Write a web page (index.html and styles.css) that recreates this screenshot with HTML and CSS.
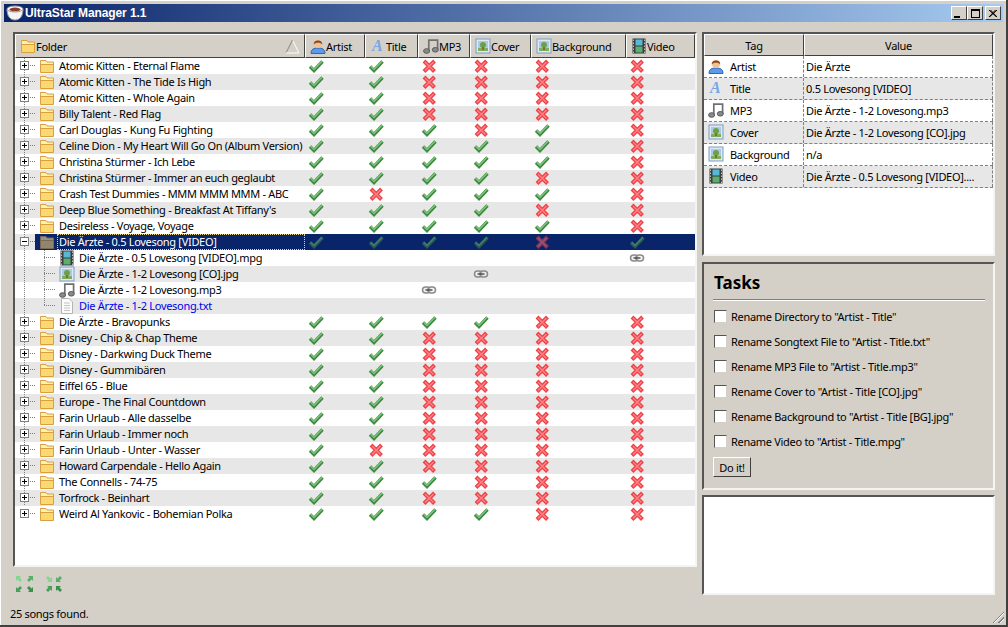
FILE: index.html
```html
<!DOCTYPE html>
<html>
<head>
    <meta charset="utf-8">
    <title>UltraStar Manager 1.1</title>
    <link rel="stylesheet" href="styles.css">
</head>
<body>

<svg class="defs" width="0" height="0">
    <symbol id="y" viewBox="0 0 16 16">
        <polyline points="2,8.5 6,12.5 14.5,3.5" fill="none" stroke="#3f8a42" stroke-width="3.4"/>
        <polyline points="2.6,8.2 6,11.5 14,3.2" fill="none" stroke="#7cc47a" stroke-width="1.5"/>
    </symbol>
    <symbol id="n" viewBox="0 0 16 16">
        <path d="M3 3 L13.5 13.5 M13.5 3 L3 13.5" fill="none" stroke="#ee4449" stroke-width="4"/>
        <path d="M4 4 L12.5 12.5 M12.5 4 L4 12.5" fill="none" stroke="#ff8488" stroke-width="1.4"/>
    </symbol>
    <symbol id="folder" viewBox="0 0 16 16">
        <path d="M1.5 4.5 V2.5 H7 L8 4 H14.5 V14.5 H1.5 Z" fill="#fff0b0" stroke="#d8a040"/>
        <path d="M2 7 H14 V14 H2 Z" fill="#fbd970"/>
        <path d="M2 6.5 H14" stroke="#d8a040"/>
    </symbol>
    <symbol id="artist" viewBox="0 0 16 16">
        <path d="M1 15.5 C1 11 4 10 8 10 C12 10 15 11 15 15.5 Z" fill="#5a9ae8" stroke="#2f66b8"/>
        <circle cx="8" cy="6" r="4" fill="#f2c096"/>
        <path d="M3.8 6.5 C3 1 13 1 12.2 6.5 C11 4 5 4 3.8 6.5 Z" fill="#8a4a20"/>
    </symbol>
    <symbol id="mp3" viewBox="0 0 16 16">
        <path d="M5.8 13 V2.2 H14.6 V11.5" fill="none" stroke="#707070" stroke-width="1.7"/>
        <ellipse cx="3.6" cy="13" rx="3" ry="2.3" fill="#8a8a8a" stroke="#5a5a5a"/>
        <ellipse cx="12.3" cy="11.8" rx="3" ry="2.3" fill="#8a8a8a" stroke="#5a5a5a"/>
    </symbol>
    <symbol id="pic" viewBox="0 0 16 16">
        <rect x="1" y="1" width="14" height="14" fill="#dfe8f4" stroke="#7f9cc4"/>
        <rect x="3" y="3" width="10" height="10" fill="#a8cce8"/>
        <rect x="3" y="10" width="10" height="3" fill="#7fae58"/>
        <circle cx="8" cy="7" r="3" fill="#6fa048"/>
        <rect x="7" y="9" width="2" height="3" fill="#8a6a3a"/>
    </symbol>
    <symbol id="film" viewBox="0 0 16 16">
        <rect x="1.5" y="0.5" width="13" height="15" fill="#3c3c3c"/>
        <rect x="4.5" y="1.5" width="7" height="6" fill="#58b8d8"/>
        <rect x="4.5" y="8.5" width="7" height="6" fill="#58b070"/>
        <path d="M2.5 1.5 V15 M13.5 1.5 V15" stroke="#bbb" stroke-dasharray="1.5 1.5"/>
    </symbol>
    <symbol id="doc" viewBox="0 0 16 16">
        <path d="M2.5 0.5 H10 L13.5 4 V15.5 H2.5 Z" fill="#fbfbfb" stroke="#b4b4b4"/>
        <path d="M5 5 H11 M5 7.5 H11 M5 10 H11 M5 12.5 H11" stroke="#c4c4c4"/>
    </symbol>
    <symbol id="link" viewBox="0 0 16 16">
        <rect x="1.5" y="5" width="7.5" height="6" rx="3" fill="#eee" stroke="#8a8a8a" stroke-width="1.5"/>
        <rect x="7" y="5" width="7.5" height="6" rx="3" fill="#eee" fill-opacity=".6" stroke="#8a8a8a" stroke-width="1.5"/>
        <path d="M4.5 8 H11.5" stroke="#333" stroke-width="1.2"/>
    </symbol>
    <symbol id="arrow" viewBox="0 0 6 6">
        <path d="M0 0 H5 L3.5 1.5 L6 4 L4 6 L1.5 3.5 L0 5 Z"/>
    </symbol>
    <symbol id="grow" viewBox="0 0 18 17">
        <use href="#arrow" x="0" y="0" width="6" height="6" fill="#86d492"/>
        <use href="#arrow" x="-17" y="0" width="6" height="6" transform="scale(-1 1)" fill="#58b068"/>
        <use href="#arrow" x="0" y="-16" width="6" height="6" transform="scale(1 -1)" fill="#48a058"/>
        <use href="#arrow" x="-17" y="-16" width="6" height="6" transform="scale(-1 -1)" fill="#38904c"/>
    </symbol>
    <symbol id="shrink" viewBox="0 0 18 17">
        <use href="#arrow" x="-7" y="-6" width="6" height="6" transform="scale(-1 -1)" fill="#86d492"/>
        <use href="#arrow" x="11" y="-6" width="6" height="6" transform="scale(1 -1)" fill="#58b068"/>
        <use href="#arrow" x="-7" y="10" width="6" height="6" transform="scale(-1 1)" fill="#48a058"/>
        <use href="#arrow" x="11" y="10" width="6" height="6" fill="#38904c"/>
    </symbol>
</svg>

<div class="window">

    <div class="titlebar">
        <svg class="app-icon" viewBox="0 0 18 16">
            <path d="M1 4 C1 11 4 15 9 15 C14 15 17 11 17 4 Z" fill="#f4f4f4" stroke="#999"/>
            <ellipse cx="9" cy="4" rx="8" ry="3" fill="#fff" stroke="#999"/>
            <ellipse cx="9" cy="4.4" rx="5.6" ry="1.8" fill="#8a3c2c"/>
        </svg>
        <span class="app-name">UltraStar Manager 1.1</span>
        <div class="win-buttons">
            <span class="win-btn"><i class="g-min"></i></span>
            <span class="win-btn"><i class="g-max"></i></span>
            <span class="win-btn win-close"><svg width="8" height="7" viewBox="0 0 8 7"><path d="M0 0 L7.5 7 M1.5 0 L8 7 M8 0 L.5 7 M6.5 0 L0 7" stroke="#000"/></svg></span>
        </div>
    </div>

    <div class="main">

        <div class="left">
            <div class="tree sunken">
                <div class="row head">
                    <div class="hd hd-folder"><svg class="ic"><use href="#folder"/></svg><span class="hd-text">Folder</span>
                        <svg class="sort" width="15" height="15" viewBox="0 0 15 15"><path d="M7.5 1 L14 14" fill="none" stroke="#fff"/><path d="M7.5 1 L1 14" fill="none" stroke="#8a867e"/><path d="M14 14 H1" stroke="#fff"/></svg>
                    </div>
                    <div class="hd"><svg class="ic"><use href="#artist"/></svg><span class="hd-text">Artist</span></div>
                    <div class="hd"><svg class="ic" viewBox="0 0 16 16"><text x="2" y="13" class="icon-a">A</text></svg><span class="hd-text">Title</span></div>
                    <div class="hd"><svg class="ic"><use href="#mp3"/></svg><span class="hd-text">MP3</span></div>
                    <div class="hd"><svg class="ic"><use href="#pic"/></svg><span class="hd-text">Cover</span></div>
                    <div class="hd"><svg class="ic"><use href="#pic"/></svg><span class="hd-text">Background</span></div>
                    <div class="hd"><svg class="ic"><use href="#film"/></svg><span class="hd-text">Video</span></div>
                </div>

                <div class="row"><div class="name"><span class="branch"><i class="exp"></i></span><svg class="ic"><use href="#folder"/></svg><span class="label">Atomic Kitten - Eternal Flame</span></div><div class="c"><svg class="ic"><use href="#y"/></svg></div><div class="c"><svg class="ic"><use href="#y"/></svg></div><div class="c"><svg class="ic"><use href="#n"/></svg></div><div class="c"><svg class="ic"><use href="#n"/></svg></div><div class="c"><svg class="ic"><use href="#n"/></svg></div><div class="c"><svg class="ic"><use href="#n"/></svg></div></div>
                <div class="row alt"><div class="name"><span class="branch"><i class="exp"></i></span><svg class="ic"><use href="#folder"/></svg><span class="label">Atomic Kitten - The Tide Is High</span></div><div class="c"><svg class="ic"><use href="#y"/></svg></div><div class="c"><svg class="ic"><use href="#y"/></svg></div><div class="c"><svg class="ic"><use href="#n"/></svg></div><div class="c"><svg class="ic"><use href="#n"/></svg></div><div class="c"><svg class="ic"><use href="#n"/></svg></div><div class="c"><svg class="ic"><use href="#n"/></svg></div></div>
                <div class="row"><div class="name"><span class="branch"><i class="exp"></i></span><svg class="ic"><use href="#folder"/></svg><span class="label">Atomic Kitten - Whole Again</span></div><div class="c"><svg class="ic"><use href="#y"/></svg></div><div class="c"><svg class="ic"><use href="#y"/></svg></div><div class="c"><svg class="ic"><use href="#n"/></svg></div><div class="c"><svg class="ic"><use href="#n"/></svg></div><div class="c"><svg class="ic"><use href="#n"/></svg></div><div class="c"><svg class="ic"><use href="#n"/></svg></div></div>
                <div class="row alt"><div class="name"><span class="branch"><i class="exp"></i></span><svg class="ic"><use href="#folder"/></svg><span class="label">Billy Talent - Red Flag</span></div><div class="c"><svg class="ic"><use href="#y"/></svg></div><div class="c"><svg class="ic"><use href="#y"/></svg></div><div class="c"><svg class="ic"><use href="#n"/></svg></div><div class="c"><svg class="ic"><use href="#n"/></svg></div><div class="c"><svg class="ic"><use href="#n"/></svg></div><div class="c"><svg class="ic"><use href="#n"/></svg></div></div>
                <div class="row"><div class="name"><span class="branch"><i class="exp"></i></span><svg class="ic"><use href="#folder"/></svg><span class="label">Carl Douglas - Kung Fu Fighting</span></div><div class="c"><svg class="ic"><use href="#y"/></svg></div><div class="c"><svg class="ic"><use href="#y"/></svg></div><div class="c"><svg class="ic"><use href="#y"/></svg></div><div class="c"><svg class="ic"><use href="#n"/></svg></div><div class="c"><svg class="ic"><use href="#y"/></svg></div><div class="c"><svg class="ic"><use href="#n"/></svg></div></div>
                <div class="row alt"><div class="name"><span class="branch"><i class="exp"></i></span><svg class="ic"><use href="#folder"/></svg><span class="label">Celine Dion - My Heart Will Go On (Album Version)</span></div><div class="c"><svg class="ic"><use href="#y"/></svg></div><div class="c"><svg class="ic"><use href="#y"/></svg></div><div class="c"><svg class="ic"><use href="#y"/></svg></div><div class="c"><svg class="ic"><use href="#y"/></svg></div><div class="c"><svg class="ic"><use href="#y"/></svg></div><div class="c"><svg class="ic"><use href="#n"/></svg></div></div>
                <div class="row"><div class="name"><span class="branch"><i class="exp"></i></span><svg class="ic"><use href="#folder"/></svg><span class="label">Christina Stürmer - Ich Lebe</span></div><div class="c"><svg class="ic"><use href="#y"/></svg></div><div class="c"><svg class="ic"><use href="#y"/></svg></div><div class="c"><svg class="ic"><use href="#y"/></svg></div><div class="c"><svg class="ic"><use href="#y"/></svg></div><div class="c"><svg class="ic"><use href="#y"/></svg></div><div class="c"><svg class="ic"><use href="#n"/></svg></div></div>
                <div class="row alt"><div class="name"><span class="branch"><i class="exp"></i></span><svg class="ic"><use href="#folder"/></svg><span class="label">Christina Stürmer - Immer an euch geglaubt</span></div><div class="c"><svg class="ic"><use href="#y"/></svg></div><div class="c"><svg class="ic"><use href="#y"/></svg></div><div class="c"><svg class="ic"><use href="#y"/></svg></div><div class="c"><svg class="ic"><use href="#y"/></svg></div><div class="c"><svg class="ic"><use href="#n"/></svg></div><div class="c"><svg class="ic"><use href="#n"/></svg></div></div>
                <div class="row"><div class="name"><span class="branch"><i class="exp"></i></span><svg class="ic"><use href="#folder"/></svg><span class="label">Crash Test Dummies - MMM MMM MMM - ABC</span></div><div class="c"><svg class="ic"><use href="#y"/></svg></div><div class="c"><svg class="ic"><use href="#n"/></svg></div><div class="c"><svg class="ic"><use href="#y"/></svg></div><div class="c"><svg class="ic"><use href="#y"/></svg></div><div class="c"><svg class="ic"><use href="#y"/></svg></div><div class="c"><svg class="ic"><use href="#n"/></svg></div></div>
                <div class="row alt"><div class="name"><span class="branch"><i class="exp"></i></span><svg class="ic"><use href="#folder"/></svg><span class="label">Deep Blue Something - Breakfast At Tiffany's</span></div><div class="c"><svg class="ic"><use href="#y"/></svg></div><div class="c"><svg class="ic"><use href="#y"/></svg></div><div class="c"><svg class="ic"><use href="#y"/></svg></div><div class="c"><svg class="ic"><use href="#y"/></svg></div><div class="c"><svg class="ic"><use href="#n"/></svg></div><div class="c"><svg class="ic"><use href="#n"/></svg></div></div>
                <div class="row"><div class="name"><span class="branch"><i class="exp"></i></span><svg class="ic"><use href="#folder"/></svg><span class="label">Desireless - Voyage, Voyage</span></div><div class="c"><svg class="ic"><use href="#y"/></svg></div><div class="c"><svg class="ic"><use href="#y"/></svg></div><div class="c"><svg class="ic"><use href="#y"/></svg></div><div class="c"><svg class="ic"><use href="#y"/></svg></div><div class="c"><svg class="ic"><use href="#y"/></svg></div><div class="c"><svg class="ic"><use href="#n"/></svg></div></div>

                <div class="row alt selected"><div class="name"><span class="branch"><i class="exp open"></i></span><div class="sel-part"><svg class="ic"><use href="#folder"/></svg><span class="label">Die Ärzte - 0.5 Lovesong [VIDEO]</span></div></div><div class="c"><svg class="ic"><use href="#y"/></svg></div><div class="c"><svg class="ic"><use href="#y"/></svg></div><div class="c"><svg class="ic"><use href="#y"/></svg></div><div class="c"><svg class="ic"><use href="#y"/></svg></div><div class="c"><svg class="ic"><use href="#n"/></svg></div><div class="c"><svg class="ic"><use href="#y"/></svg></div></div>
                <div class="row child"><div class="name"><span class="branch no-arm"></span><span class="branch2"></span><svg class="ic"><use href="#film"/></svg><span class="label">Die Ärzte - 0.5 Lovesong [VIDEO].mpg</span></div><div class="c"></div><div class="c"></div><div class="c"></div><div class="c"></div><div class="c"></div><div class="c"><svg class="ic"><use href="#link"/></svg></div></div>
                <div class="row alt child"><div class="name"><span class="branch no-arm"></span><span class="branch2"></span><svg class="ic"><use href="#pic"/></svg><span class="label">Die Ärzte - 1-2 Lovesong [CO].jpg</span></div><div class="c"></div><div class="c"></div><div class="c"></div><div class="c"><svg class="ic"><use href="#link"/></svg></div><div class="c"></div><div class="c"></div></div>
                <div class="row child"><div class="name"><span class="branch no-arm"></span><span class="branch2"></span><svg class="ic"><use href="#mp3"/></svg><span class="label">Die Ärzte - 1-2 Lovesong.mp3</span></div><div class="c"></div><div class="c"></div><div class="c"><svg class="ic"><use href="#link"/></svg></div><div class="c"></div><div class="c"></div><div class="c"></div></div>
                <div class="row alt child"><div class="name"><span class="branch no-arm"></span><span class="branch2 last"></span><svg class="ic"><use href="#doc"/></svg><span class="label songtext">Die Ärzte - 1-2 Lovesong.txt</span></div><div class="c"></div><div class="c"></div><div class="c"></div><div class="c"></div><div class="c"></div><div class="c"></div></div>

                <div class="row"><div class="name"><span class="branch"><i class="exp"></i></span><svg class="ic"><use href="#folder"/></svg><span class="label">Die Ärzte - Bravopunks</span></div><div class="c"><svg class="ic"><use href="#y"/></svg></div><div class="c"><svg class="ic"><use href="#y"/></svg></div><div class="c"><svg class="ic"><use href="#y"/></svg></div><div class="c"><svg class="ic"><use href="#y"/></svg></div><div class="c"><svg class="ic"><use href="#n"/></svg></div><div class="c"><svg class="ic"><use href="#n"/></svg></div></div>
                <div class="row alt"><div class="name"><span class="branch"><i class="exp"></i></span><svg class="ic"><use href="#folder"/></svg><span class="label">Disney - Chip &amp; Chap Theme</span></div><div class="c"><svg class="ic"><use href="#y"/></svg></div><div class="c"><svg class="ic"><use href="#y"/></svg></div><div class="c"><svg class="ic"><use href="#n"/></svg></div><div class="c"><svg class="ic"><use href="#n"/></svg></div><div class="c"><svg class="ic"><use href="#n"/></svg></div><div class="c"><svg class="ic"><use href="#n"/></svg></div></div>
                <div class="row"><div class="name"><span class="branch"><i class="exp"></i></span><svg class="ic"><use href="#folder"/></svg><span class="label">Disney - Darkwing Duck Theme</span></div><div class="c"><svg class="ic"><use href="#y"/></svg></div><div class="c"><svg class="ic"><use href="#y"/></svg></div><div class="c"><svg class="ic"><use href="#n"/></svg></div><div class="c"><svg class="ic"><use href="#n"/></svg></div><div class="c"><svg class="ic"><use href="#n"/></svg></div><div class="c"><svg class="ic"><use href="#n"/></svg></div></div>
                <div class="row alt"><div class="name"><span class="branch"><i class="exp"></i></span><svg class="ic"><use href="#folder"/></svg><span class="label">Disney - Gummibären</span></div><div class="c"><svg class="ic"><use href="#y"/></svg></div><div class="c"><svg class="ic"><use href="#y"/></svg></div><div class="c"><svg class="ic"><use href="#n"/></svg></div><div class="c"><svg class="ic"><use href="#n"/></svg></div><div class="c"><svg class="ic"><use href="#n"/></svg></div><div class="c"><svg class="ic"><use href="#n"/></svg></div></div>
                <div class="row"><div class="name"><span class="branch"><i class="exp"></i></span><svg class="ic"><use href="#folder"/></svg><span class="label">Eiffel 65 - Blue</span></div><div class="c"><svg class="ic"><use href="#y"/></svg></div><div class="c"><svg class="ic"><use href="#y"/></svg></div><div class="c"><svg class="ic"><use href="#n"/></svg></div><div class="c"><svg class="ic"><use href="#n"/></svg></div><div class="c"><svg class="ic"><use href="#n"/></svg></div><div class="c"><svg class="ic"><use href="#n"/></svg></div></div>
                <div class="row alt"><div class="name"><span class="branch"><i class="exp"></i></span><svg class="ic"><use href="#folder"/></svg><span class="label">Europe - The Final Countdown</span></div><div class="c"><svg class="ic"><use href="#y"/></svg></div><div class="c"><svg class="ic"><use href="#y"/></svg></div><div class="c"><svg class="ic"><use href="#n"/></svg></div><div class="c"><svg class="ic"><use href="#n"/></svg></div><div class="c"><svg class="ic"><use href="#n"/></svg></div><div class="c"><svg class="ic"><use href="#n"/></svg></div></div>
                <div class="row"><div class="name"><span class="branch"><i class="exp"></i></span><svg class="ic"><use href="#folder"/></svg><span class="label">Farin Urlaub - Alle dasselbe</span></div><div class="c"><svg class="ic"><use href="#y"/></svg></div><div class="c"><svg class="ic"><use href="#y"/></svg></div><div class="c"><svg class="ic"><use href="#n"/></svg></div><div class="c"><svg class="ic"><use href="#n"/></svg></div><div class="c"><svg class="ic"><use href="#n"/></svg></div><div class="c"><svg class="ic"><use href="#n"/></svg></div></div>
                <div class="row alt"><div class="name"><span class="branch"><i class="exp"></i></span><svg class="ic"><use href="#folder"/></svg><span class="label">Farin Urlaub - Immer noch</span></div><div class="c"><svg class="ic"><use href="#y"/></svg></div><div class="c"><svg class="ic"><use href="#y"/></svg></div><div class="c"><svg class="ic"><use href="#n"/></svg></div><div class="c"><svg class="ic"><use href="#n"/></svg></div><div class="c"><svg class="ic"><use href="#n"/></svg></div><div class="c"><svg class="ic"><use href="#n"/></svg></div></div>
                <div class="row"><div class="name"><span class="branch"><i class="exp"></i></span><svg class="ic"><use href="#folder"/></svg><span class="label">Farin Urlaub - Unter - Wasser</span></div><div class="c"><svg class="ic"><use href="#y"/></svg></div><div class="c"><svg class="ic"><use href="#n"/></svg></div><div class="c"><svg class="ic"><use href="#n"/></svg></div><div class="c"><svg class="ic"><use href="#n"/></svg></div><div class="c"><svg class="ic"><use href="#n"/></svg></div><div class="c"><svg class="ic"><use href="#n"/></svg></div></div>
                <div class="row alt"><div class="name"><span class="branch"><i class="exp"></i></span><svg class="ic"><use href="#folder"/></svg><span class="label">Howard Carpendale - Hello Again</span></div><div class="c"><svg class="ic"><use href="#y"/></svg></div><div class="c"><svg class="ic"><use href="#y"/></svg></div><div class="c"><svg class="ic"><use href="#n"/></svg></div><div class="c"><svg class="ic"><use href="#n"/></svg></div><div class="c"><svg class="ic"><use href="#n"/></svg></div><div class="c"><svg class="ic"><use href="#n"/></svg></div></div>
                <div class="row"><div class="name"><span class="branch"><i class="exp"></i></span><svg class="ic"><use href="#folder"/></svg><span class="label">The Connells - 74-75</span></div><div class="c"><svg class="ic"><use href="#y"/></svg></div><div class="c"><svg class="ic"><use href="#y"/></svg></div><div class="c"><svg class="ic"><use href="#y"/></svg></div><div class="c"><svg class="ic"><use href="#n"/></svg></div><div class="c"><svg class="ic"><use href="#n"/></svg></div><div class="c"><svg class="ic"><use href="#n"/></svg></div></div>
                <div class="row alt"><div class="name"><span class="branch"><i class="exp"></i></span><svg class="ic"><use href="#folder"/></svg><span class="label">Torfrock - Beinhart</span></div><div class="c"><svg class="ic"><use href="#y"/></svg></div><div class="c"><svg class="ic"><use href="#y"/></svg></div><div class="c"><svg class="ic"><use href="#n"/></svg></div><div class="c"><svg class="ic"><use href="#n"/></svg></div><div class="c"><svg class="ic"><use href="#n"/></svg></div><div class="c"><svg class="ic"><use href="#n"/></svg></div></div>
                <div class="row"><div class="name"><span class="branch end"><i class="exp"></i></span><svg class="ic"><use href="#folder"/></svg><span class="label">Weird Al Yankovic - Bohemian Polka</span></div><div class="c"><svg class="ic"><use href="#y"/></svg></div><div class="c"><svg class="ic"><use href="#y"/></svg></div><div class="c"><svg class="ic"><use href="#y"/></svg></div><div class="c"><svg class="ic"><use href="#y"/></svg></div><div class="c"><svg class="ic"><use href="#n"/></svg></div><div class="c"><svg class="ic"><use href="#n"/></svg></div></div>
            </div>

            <div class="tools">
                <svg class="tool"><use href="#grow"/></svg>
                <svg class="tool"><use href="#shrink"/></svg>
            </div>
        </div>

        <div class="right">
            <div class="tags sunken">
                <div class="tag-head">
                    <div class="tag-hd">Tag</div>
                    <div class="tag-hd">Value</div>
                </div>
                <div class="tag-row"><div class="tag-key"><svg class="ic"><use href="#artist"/></svg>Artist</div><div class="tag-val">Die Ärzte</div></div>
                <div class="tag-row alt"><div class="tag-key"><svg class="ic" viewBox="0 0 16 16"><text x="2" y="13" class="icon-a">A</text></svg>Title</div><div class="tag-val">0.5 Lovesong [VIDEO]</div></div>
                <div class="tag-row"><div class="tag-key"><svg class="ic"><use href="#mp3"/></svg>MP3</div><div class="tag-val">Die Ärzte - 1-2 Lovesong.mp3</div></div>
                <div class="tag-row alt"><div class="tag-key"><svg class="ic"><use href="#pic"/></svg>Cover</div><div class="tag-val">Die Ärzte - 1-2 Lovesong [CO].jpg</div></div>
                <div class="tag-row"><div class="tag-key"><svg class="ic"><use href="#pic"/></svg>Background</div><div class="tag-val">n/a</div></div>
                <div class="tag-row alt"><div class="tag-key"><svg class="ic"><use href="#film"/></svg>Video</div><div class="tag-val">Die Ärzte - 0.5 Lovesong [VIDEO]....</div></div>
            </div>

            <div class="tasks sunken">
                <h2 class="tasks-title">Tasks</h2>
                <label class="task"><input type="checkbox" class="chk">Rename Directory to "Artist - Title"</label>
                <label class="task"><input type="checkbox" class="chk">Rename Songtext File to "Artist - Title.txt"</label>
                <label class="task"><input type="checkbox" class="chk">Rename MP3 File to "Artist - Title.mp3"</label>
                <label class="task"><input type="checkbox" class="chk">Rename Cover to "Artist - Title [CO].jpg"</label>
                <label class="task"><input type="checkbox" class="chk">Rename Background to "Artist - Title [BG].jpg"</label>
                <label class="task"><input type="checkbox" class="chk">Rename Video to "Artist - Title.mpg"</label>
                <button class="btn-do">Do it!</button>
            </div>

            <div class="log sunken"></div>
        </div>
    </div>

    <div class="status">25 songs found.</div>
    <div class="grip"></div>
</div>

</body>
</html>
```

FILE: styles.css
```css
* {
    box-sizing: border-box;
}

body {
    margin: 0;
    font-family: "Noto Sans", sans-serif;
    font-size: 11px;
    letter-spacing: -0.3px;
    color: #000;
}

.defs {
    position: absolute;
}

.icon-a {
    font-family: "Liberation Serif", serif;
    font-size: 16px;
    font-weight: bold;
    font-style: italic;
    fill: #7ba4e4;
}

.window {
    position: relative;
    width: 1008px;
    height: 627px;
    padding: 4px;
    display: flex;
    flex-direction: column;
    background-color: #d4d0c8;
    border-right: 2px solid #404040;
    border-bottom: 2px solid #404040;
    box-shadow: inset 1px 1px 0 #fff;
}

.titlebar {
    height: 18px;
    margin-right: -1px;
    display: flex;
    align-items: center;
    background: linear-gradient(90deg, #0a246a 0%, #a6caf0 100%);
    color: white;
    flex-shrink: 0;
}

.app-icon {
    width: 18px;
    height: 16px;
    margin-left: 2px;
}

.app-name {
    margin-left: 1px;
    font-family: "Liberation Sans", sans-serif;
    font-size: 12px;
    font-weight: bold;
    letter-spacing: -0.1px;
}

.win-buttons {
    margin-left: auto;
    margin-right: 2px;
    display: flex;
}

.win-btn {
    width: 16px;
    height: 14px;
    position: relative;
    display: flex;
    align-items: center;
    justify-content: center;
    background-color: #d4d0c8;
    border: 1px solid;
    border-color: #fff #404040 #404040 #fff;
}

.win-close {
    margin-left: 2px;
}

.g-min {
    width: 6px;
    height: 2px;
    margin: 7px 4px 0 0;
    background-color: #000;
}

.g-max {
    width: 9px;
    height: 9px;
    border: 1px solid #000;
    border-top-width: 2px;
}

.main {
    flex: 1;
    padding: 10px 8px 0 9px;
    display: flex;
    gap: 5px;
    min-height: 0;
}

.sunken {
    border: 2px solid;
    border-color: #555 #f4f4f0 #f4f4f0 #555;
}

.left {
    width: 684px;
    flex-shrink: 0;
}

.tree {
    height: 535px;
    background-color: white;
}

.row {
    height: 16px;
    display: grid;
    grid-template-columns: 290px 60px 53px 52px 61px 95px 69px;
    align-items: center;
}

.alt {
    background-color: #e7e7e7;
}

.head {
    height: 24px;
    background-color: #d4d0c8;
}

.hd {
    height: 24px;
    padding-left: 4px;
    display: flex;
    align-items: center;
    border: 1px solid;
    border-color: #fff #404040 #404040 #fff;
}

.hd-text {
    margin-left: 0;
}

.sort {
    margin-left: auto;
    margin-right: 4px;
}

.ic {
    width: 16px;
    height: 16px;
    display: block;
    flex-shrink: 0;
}

.c {
    height: 16px;
    padding-left: 3px;
}

.name {
    height: 16px;
    display: flex;
    align-items: center;
}

.branch,
.branch2 {
    width: 20px;
    height: 16px;
    flex-shrink: 0;
    position: relative;
    background-image: linear-gradient(#808080 50%, transparent 50%);
    background-size: 1px 2px;
    background-repeat: repeat-y;
    background-position: 9px 0;
}

.branch.end {
    background-image: none;
}

.branch::after,
.branch2::after {
    content: "";
    position: absolute;
    left: 9px;
    top: 7px;
    width: 11px;
    height: 1px;
    background-image: linear-gradient(90deg, #808080 50%, transparent 50%);
    background-size: 2px 1px;
}

.no-arm::after {
    display: none;
}

.branch2.last {
    height: 8px;
    align-self: flex-start;
}

.exp {
    position: absolute;
    z-index: 1;
    left: 5px;
    top: 3px;
    width: 9px;
    height: 9px;
    background-color: white;
    border: 1px solid #808080;
}

.exp::before {
    content: "";
    position: absolute;
    left: 1px;
    top: 3px;
    width: 5px;
    height: 1px;
    background-color: #000;
}

.exp::after {
    content: "";
    position: absolute;
    left: 3px;
    top: 1px;
    width: 1px;
    height: 5px;
    background-color: #000;
}

.exp.open::after {
    display: none;
}

.name > .ic,
.sel-part > .ic {
    margin-left: 4px;
}

.label {
    margin-left: 2px;
    padding-left: 2px;
    flex: 1;
    height: 16px;
    line-height: 15px;
    white-space: nowrap;
}

.songtext {
    color: #0000ee;
}

.selected {
    background: linear-gradient(90deg, #e7e7e7 20px, #0a246a 20px);
    color: white;
}

.sel-part {
    flex: 1;
    display: flex;
    align-items: center;
}

.selected .ic {
    opacity: 0.55;
}

.selected .label {
    outline: 1px dotted #e8d890;
    outline-offset: -1px;
}

.tools {
    padding: 9px 0 0 3px;
    display: flex;
    gap: 11px;
}

.tool {
    width: 18px;
    height: 17px;
}

.right {
    width: 293px;
    display: flex;
    flex-direction: column;
}

.tags {
    height: 224px;
    background-color: white;
}

.tag-head {
    height: 22px;
    display: grid;
    grid-template-columns: 100px 189px;
    background-color: #d4d0c8;
}

.tag-hd {
    display: flex;
    align-items: center;
    justify-content: center;
    border: 1px solid;
    border-color: #fff #404040 #404040 #fff;
}

.tag-row {
    height: 22px;
    display: grid;
    grid-template-columns: 100px 189px;
    border-bottom: 1px dashed #808080;
}

.tag-key {
    padding: 0 0 1px 4px;
    display: flex;
    align-items: center;
    gap: 6px;
    border-right: 1px dashed #808080;
}

.tag-val {
    padding: 0 0 1px 2px;
    display: flex;
    align-items: center;
    white-space: nowrap;
    border-right: 1px dashed #808080;
}

.tasks {
    height: 228px;
    margin-top: 6px;
    padding: 0 8px 0 9px;
}

.tasks-title {
    margin: 0 0 4px;
    padding: 8px 0 5px 1px;
    font-size: 17px;
    line-height: 22px;
    font-weight: bold;
    letter-spacing: 0;
    border-bottom: 1px solid #808080;
    box-shadow: 0 1px 0 #fff;
}

.task {
    height: 25px;
    display: flex;
    align-items: center;
    white-space: nowrap;
}

.chk {
    appearance: none;
    width: 13px;
    height: 13px;
    margin: 0 4px 0 1px;
    background-color: white;
    border: 1px solid;
    border-color: #555 #d4d0c8 #d4d0c8 #555;
}

.btn-do {
    width: 38px;
    height: 20px;
    margin-top: 3px;
    padding: 0;
    font-family: inherit;
    font-size: 11px;
    letter-spacing: inherit;
    background-color: #d4d0c8;
    border: 1px solid;
    border-color: #fff #404040 #404040 #fff;
}

.log {
    height: 100px;
    margin-top: 5px;
    background-color: white;
}

.status {
    height: 21px;
    padding: 5px 0 0 6px;
    flex-shrink: 0;
    line-height: 17px;
}

.grip {
    position: absolute;
    right: 2px;
    bottom: 2px;
    width: 13px;
    height: 13px;
    background: repeating-linear-gradient(135deg, transparent 0 2px, #808080 2px 3px, #fff 3px 4px);
    clip-path: polygon(100% 0, 100% 100%, 0 100%);
}
```
